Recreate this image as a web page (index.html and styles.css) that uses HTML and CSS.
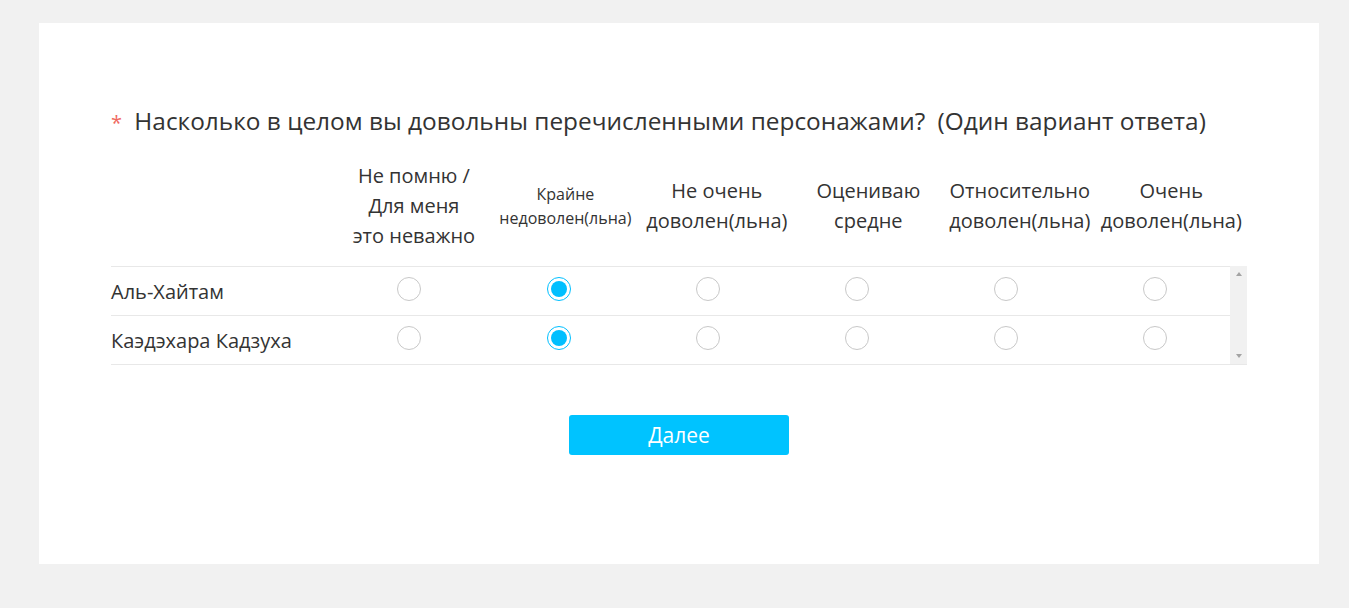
FILE: index.html
```html
<!DOCTYPE html>
<html lang="ru">
<head>
  <meta charset="UTF-8">
  <title>Опрос</title>
  <meta name="viewport" content="width=device-width, initial-scale=1.0">
  <link rel="stylesheet" href="styles.css">
</head>
<body>
  <div class="card">
    <div class="question">
      <span class="required">*</span>
      <span class="q-text">Насколько в целом вы довольны перечисленными персонажами?</span>
      <span class="q-hint">(Один вариант ответа)</span>
    </div>

    <table class="matrix-head">
      <tr>
        <th class="label-col"></th>
        <th>Не помню /<br>Для меня<br>это неважно</th>
        <th class="small">Крайне<br>недоволен(льна)</th>
        <th>Не очень<br>доволен(льна)</th>
        <th>Оцениваю<br>средне</th>
        <th>Относительно<br>доволен(льна)</th>
        <th>Очень<br>доволен(льна)</th>
      </tr>
    </table>

    <div class="matrix-body">
      <table class="matrix-rows">
        <tr>
          <td class="label-col">Аль-Хайтам</td>
          <td><span class="radio"></span></td>
          <td><span class="radio checked"></span></td>
          <td><span class="radio"></span></td>
          <td><span class="radio"></span></td>
          <td><span class="radio"></span></td>
          <td><span class="radio"></span></td>
        </tr>
        <tr>
          <td class="label-col">Каэдэхара Кадзуха</td>
          <td><span class="radio"></span></td>
          <td><span class="radio checked"></span></td>
          <td><span class="radio"></span></td>
          <td><span class="radio"></span></td>
          <td><span class="radio"></span></td>
          <td><span class="radio"></span></td>
        </tr>
      </table>
      <div class="scrollbar">
        <span class="arrow up"></span>
        <span class="arrow down"></span>
      </div>
    </div>

    <div class="actions">
      <button class="next">Далее</button>
    </div>
  </div>
</body>
</html>
```

FILE: styles.css
```css
body {
  font-family: 'Open Sans', 'Noto Sans', sans-serif;
  margin: 0;
  background: #f1f1f1;
  color: #333;
}
.card {
  margin: 23px 30px 0 39px;
  height: 541px;
  box-sizing: border-box;
  padding: 81px 72px 0;
  background: white;
}
.question {
  font-size: 24.4px;
  line-height: 34px;
  color: #333;
  white-space: nowrap;
}
.required {
  color: #f0695f;
  font-size: 20px;
  margin-right: 6px;
}
.q-hint {
  margin-left: 6px;
}
table {
  border-collapse: collapse;
  width: 100%;
  table-layout: fixed;
}
.label-col {
  width: 20%;
  text-align: left;
}
.matrix-head {
  margin-top: 21px;
}
.matrix-head th {
  font-weight: normal;
  font-size: 20px;
  line-height: 30px;
  text-align: center;
  vertical-align: middle;
  padding: 0 0 15px;
  white-space: nowrap;
}
.matrix-head th.small {
  font-size: 16px;
  line-height: 24px;
}
.matrix-body {
  display: flex;
  border-bottom: 1px solid #e8e8e8;
}
.matrix-rows td {
  height: 48px;
  border-top: 1px solid #e8e8e8;
  text-align: center;
  vertical-align: middle;
  padding: 0;
  font-size: 20px;
}
.matrix-rows td.label-col {
  text-align: left;
}
.radio {
  display: inline-block;
  width: 22px;
  height: 22px;
  border: 1px solid #c8c8c8;
  border-radius: 50%;
  vertical-align: middle;
  position: relative;
  top: -4px;
}
.radio.checked {
  border-color: #00bfff;
}
.radio.checked::after {
  content: "";
  position: absolute;
  left: 3px;
  top: 3px;
  width: 16px;
  height: 16px;
  border-radius: 50%;
  background: #00bfff;
}
.scrollbar {
  flex: 0 0 17px;
  background: #f1f1f1;
  display: flex;
  flex-direction: column;
  justify-content: space-between;
  align-items: center;
  padding: 6px 0;
  box-sizing: border-box;
}
.arrow {
  width: 0;
  height: 0;
  border-left: 3px solid transparent;
  border-right: 3px solid transparent;
}
.arrow.up {
  border-bottom: 4px solid #a3a3a3;
}
.arrow.down {
  border-top: 4px solid #a3a3a3;
}
.actions {
  display: flex;
  justify-content: center;
  margin-top: 50px;
}
.next {
  width: 220px;
  height: 40px;
  border: none;
  border-radius: 3px;
  background: #00c3ff;
  color: white;
  font-family: 'Open Sans', 'Noto Sans', sans-serif;
  font-size: 21px;
  cursor: pointer;
}
```
